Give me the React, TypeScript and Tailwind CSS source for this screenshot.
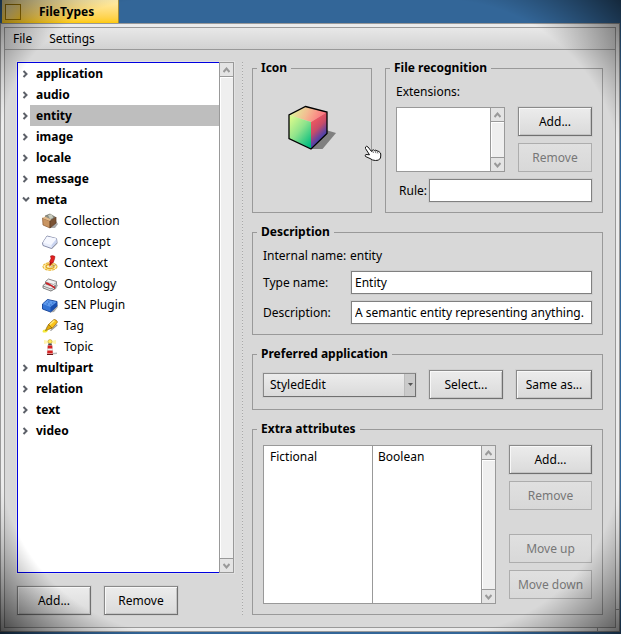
import { useState } from "react";
import type { ReactNode } from "react";

const Chevron = ({ open = false }: { open?: boolean }) => (
  <svg width="8" height="8" viewBox="0 0 8 8" className={open ? "rotate-90" : ""} aria-hidden="true">
    <path d="M1.500 1 L4.500 4 L1.500 7" fill="none" stroke="#5c6068" strokeWidth="2" />
  </svg>
);

const CollectionIcon = () => (
  <svg width="16" height="16" viewBox="0 0 16 16" aria-hidden="true">
    <path d="M8 15 L13 15 L16 11 L14 8Z" fill="#aaa" />
    <path d="M3 3 L8 1 L13 4 L8 8Z" fill="#8d8f84" stroke="#5d5a50" strokeWidth=".6" />
    <path d="M6 2 L10 1 L11 5 L8 6Z" fill="#c9cbbd" />
    <path d="M0.5 5 L8 8 L8 15 L1 12Z" fill="#c99562" stroke="#8c5c34" strokeWidth=".7" />
    <path d="M8 8 L14 4 L14 10 L8 15Z" fill="#7b5334" stroke="#5a3a22" strokeWidth=".7" />
    <path d="M0.5 5 L3 3.5 L9 6.5 L8 8Z" fill="#e3bb8c" />
  </svg>
);

const ConceptIcon = () => (
  <svg width="16" height="16" viewBox="0 0 16 16" aria-hidden="true">
    <path d="M9 15 L15 8 L15.5 9.5 L10 15Z" fill="#aaa" />
    <path d="M5 2 L14.500 4.500 L15 8.500 L9.500 14.500 L1 11.500 L0.500 9Z" fill="#e8edfb" stroke="#7a81a0" strokeWidth=".9" />
    <path d="M5 2.500 L14.500 4.500 L9.500 11 L1 8.500Z" fill="#f6f8ff" />
    <path d="M9.500 11 L14.500 5 L14.500 8.500 L9.500 14Z" fill="#c9d4f0" />
  </svg>
);

const ContextIcon = () => (
  <svg width="16" height="16" viewBox="0 0 16 16" aria-hidden="true">
    <ellipse cx="8" cy="11.500" rx="7" ry="3.700" fill="#fff3bd" stroke="#e8b530" strokeWidth="1.100" strokeDasharray="3 .6" />
    <ellipse cx="8" cy="11.500" rx="4" ry="2" fill="none" stroke="#e0a520" strokeWidth="1.300" />
    <path d="M8 12 L14 9 L15 10 L9 12.500Z" fill="#9b8d60" opacity=".6" />
    <path d="M8.500 5.500 L11.500 6 L9.500 9 L7.500 12 L7.500 8.500Z" fill="#b31212" />
    <path d="M8.500 1 Q10.500 0 13 1.500 L12.500 4 L11 8 Q9.500 8.500 7.500 7 L9 3.500Z" fill="#e32020" stroke="#8f0d0d" strokeWidth=".5" />
  </svg>
);

const OntologyIcon = () => (
  <svg width="16" height="16" viewBox="0 0 16 16" aria-hidden="true">
    <path d="M8 15.500 L14 13 L16 9 L13 8Z" fill="#aaa" />
    <path d="M1 9.500 L4 7 L13 10 L13 12.500 L9 15 L1 12Z" fill="#e9e9e9" stroke="#626262" strokeWidth=".8" />
    <path d="M1 10 L9 13 L13 10.500" fill="none" stroke="#777" strokeWidth=".8" />
    <path d="M3.500 5.500 L6.500 3 L14.500 5.500 L14.500 8.500 L11.500 10.500 L3.500 8Z" fill="#f2f2f2" stroke="#707070" strokeWidth=".8" />
    <path d="M3.500 6 L11.500 8.500 L14.500 6.500" fill="none" stroke="#888" strokeWidth=".7" />
    <path d="M3.500 6 L6.500 7 L13 11 L13 13 L9.500 10.500 L4 8Z" fill="#cf2226" />
  </svg>
);

const PluginIcon = () => (
  <svg width="16" height="16" viewBox="0 0 16 16" aria-hidden="true">
    <path d="M8 15.500 L12 15 L16 10 L15 7Z" fill="#aaa" />
    <path d="M0.500 7 L5.500 2.500 L15 4.500 L15 9 L8.500 15 L0.500 12Z" fill="#3575d6" stroke="#123f94" strokeWidth=".9" />
    <path d="M1 7 L5.500 3 L14.500 5 L8.500 10Z" fill="#5f9aec" />
    <path d="M8.500 10 L15 5 L15 9 L8.500 15Z" fill="#1b4fae" />
    <path d="M6 5h1.500M10 6h1.500M4.500 7h1.500M8 8h1.500" stroke="#2f68c4" strokeWidth="1" />
  </svg>
);

const TagIcon = () => (
  <svg width="16" height="16" viewBox="0 0 16 16" aria-hidden="true">
    <path d="M1 12 Q3 11 6 12 L5 14 Q2 15 0.500 14Z" fill="#f5ea3c" />
    <path d="M5 11 L8 12.500 L15 6 L15.500 7.500 L9 13Z" fill="#999" />
    <path d="M6.500 6.500 L12 1.500 Q14.500 1.500 15.500 4 L10.500 10 L7 10.500Z" fill="#fac31a" stroke="#a56b05" strokeWidth=".8" />
    <path d="M8 6.500 L12.500 2.500" stroke="#ffed84" strokeWidth="1.300" />
    <path d="M6.500 6.500 L10 10 L6.500 11.500 L3.500 12.500 L5 9Z" fill="#e0a90a" stroke="#7b5a0d" strokeWidth=".6" />
  </svg>
);

const TopicIcon = () => (
  <svg width="16" height="16" viewBox="0 0 16 16" aria-hidden="true">
    <path d="M2 1 L7 2 L7 4 L2 5Z M14 1 L9 2 L9 4 L14 5Z" fill="#fff6b5" />
    <path d="M10 14 L15 13.500 L15 15 L10 15.500Z" fill="#bbb" />
    <circle cx="8" cy="2.500" r="2" fill="#ffe95c" stroke="#b39425" strokeWidth=".5" />
    <path d="M6.200 4.500h3.600v2H6.200z" fill="#4c4c4c" />
    <path d="M5.800 6.500h4.400l.6 9H5.200z" fill="#f2f2f2" stroke="#999" strokeWidth=".3" />
    <path d="M5.800 6.500h4.400l.2 3H5.600zM5.400 11.500h5.200l.2 3H5.200z" fill="#d62020" />
    <path d="M5 15h6v1H5z" fill="#681414" />
  </svg>
);

const CubeIcon = () => (
  <svg width="48" height="48" viewBox="0 0 48 48" role="img" aria-label="Entity icon">
    <defs>
      <linearGradient id="cubeTop" x1="0" y1="0.200" x2="1" y2="0.400">
        <stop offset="0" stopColor="#dcff9a" />
        <stop offset=".5" stopColor="#f3bc92" />
        <stop offset="1" stopColor="#ff6a7c" />
      </linearGradient>
      <linearGradient id="cubeLeft" x1="0.100" y1="0.100" x2="0.800" y2="1">
        <stop offset="0" stopColor="#d5f98c" />
        <stop offset=".45" stopColor="#8ee38c" />
        <stop offset="1" stopColor="#00bd80" />
      </linearGradient>
      <linearGradient id="cubeRight" gradientUnits="userSpaceOnUse" x1="25" y1="16" x2="41" y2="32">
        <stop offset="0" stopColor="#f0585f" />
        <stop offset=".4" stopColor="#c84c68" />
        <stop offset=".7" stopColor="#6a449c" />
        <stop offset="1" stopColor="#1d3bb8" />
      </linearGradient>
    </defs>
    <path d="M38 26 L48 29 L34.500 45 L22 45Z" fill="#808080" />
    <path d="M17.500 2.500 L39 8 L23 18 L1 11Z" fill="url(#cubeTop)" />
    <path d="M1 11 L23 18 L23 45 L1 34.500Z" fill="url(#cubeLeft)" />
    <path d="M23 18 L39 8 L39 29.500 L23 45Z" fill="url(#cubeRight)" />
    <path d="M17.500 2.500 L39 8 L39 29.500 L23 45 L1 34.500 L1 11Z" fill="none" stroke="#000" strokeWidth="1.300" />
  </svg>
);

const HandPointer = () => (
  <svg width="18" height="17" viewBox="0 0 18 17" className="pointer-events-none absolute left-[364px] top-[145px]" aria-hidden="true">
    <path
      d="M1.500 2 Q2.500 0.500 4 2 L7.500 6.500 L8.500 5 Q10 4.500 10.500 5.500 Q12 4.500 13 6 Q14.500 5.500 15.200 7 Q17 7.500 16.800 10 L16.500 13 Q15 16 11.500 15.500 Q8.500 15.500 6 13.500 L1.500 11.500 Q0.500 10 2 9.500 L5.500 9.800 L1.500 3.500Z"
      fill="#fff"
      stroke="#111"
      strokeWidth="1"
    />
    <path d="M8.500 5.500 L9.500 8M11 5.800 L12 8.200M13.300 6.500 L14 8.500" stroke="#333" strokeWidth=".7" />
  </svg>
);

const types: { name: string; children?: { name: string; icon: ReactNode }[] }[] = [
  { name: "application" },
  { name: "audio" },
  { name: "entity" },
  { name: "image" },
  { name: "locale" },
  { name: "message" },
  {
    name: "meta",
    children: [
      { name: "Collection", icon: <CollectionIcon /> },
      { name: "Concept", icon: <ConceptIcon /> },
      { name: "Context", icon: <ContextIcon /> },
      { name: "Ontology", icon: <OntologyIcon /> },
      { name: "SEN Plugin", icon: <PluginIcon /> },
      { name: "Tag", icon: <TagIcon /> },
      { name: "Topic", icon: <TopicIcon /> },
    ],
  },
  { name: "multipart" },
  { name: "relation" },
  { name: "text" },
  { name: "video" },
];

function Button({ children, disabled, className = "w-[74px]" }: { children: ReactNode; disabled?: boolean; className?: string }) {
  return (
    <button
      type="button"
      disabled={disabled}
      className={`h-[29px] shrink-0 whitespace-nowrap border bg-linear-to-b text-center ${
        disabled
          ? "border-[#adadad] from-[#e0e0e0] to-[#d8d8d8] text-[#777]"
          : "border-[#8a8a8a] border-b-[#707070] border-r-[#707070] from-[#ececec] to-[#dadada] text-black shadow-[inset_1px_1px_0_#f8f8f8,inset_-1px_-1px_0_#c4c4c4,0_0_0_1px_#cfcfcf]"
      } ${className}`}
    >
      {children}
    </button>
  );
}

function Arrow({ down = false }: { down?: boolean }) {
  return (
    <svg width="7" height="6" viewBox="0 0 7 6" className={down ? "rotate-180" : ""} aria-hidden="true">
      <path d="M0.500 5 L3.500 1.500 L6.500 5" fill="none" stroke="#999" strokeWidth="2" />
    </svg>
  );
}

function ScrollBar() {
  return (
    <div className="flex w-[14px] shrink-0 flex-col border-l border-[#999] bg-[#efefef]">
      <button type="button" aria-label="Scroll up" className="flex h-[14px] items-center justify-center border-b border-[#999] bg-[#e4e4e4]">
        <Arrow />
      </button>
      <div className="flex-1 shadow-[inset_1px_1px_0_#fff]" />
      <button type="button" aria-label="Scroll down" className="flex h-[14px] items-center justify-center border-t border-[#999] bg-[#e4e4e4]">
        <Arrow down />
      </button>
    </div>
  );
}

function Group({ title, className = "", children }: { title: string; className?: string; children: ReactNode }) {
  return (
    <fieldset className={`min-w-0 border border-[#999] ${className}`}>
      <legend className="ml-1 px-1 font-bold leading-3">{title}</legend>
      {children}
    </fieldset>
  );
}

const field = "h-[23px] min-w-0 flex-1 border border-[#808080] bg-white px-[3px] outline-none shadow-[0_0_0_1px_#cecece]";

export default function App() {
  const [selected, setSelected] = useState("entity");
  const [open, setOpen] = useState<string[]>(["meta"]);
  const toggle = (name: string) => setOpen(open.includes(name) ? open.filter((n) => n !== name) : [...open, name]);

  return (
    <div className="relative flex min-h-screen flex-col bg-[#336698] pb-0.5 pr-px font-['Noto_Sans',sans-serif] text-xs text-black">
      <header className="ml-0.5 flex h-[23px] w-[117px] items-center gap-[18px] border-r border-[#a08a3c] bg-linear-to-b from-[#ffedab] to-[#ffcb00] pl-[3px]">
        <button type="button" aria-label="Close" className="size-4 border border-[#a57b00] bg-linear-to-br from-[#fff0b4] to-[#ffcc11]" />
        <h1 className="font-bold">FileTypes</h1>
      </header>

      <div className="relative flex flex-1 flex-col border border-[#999] bg-[#ececec] p-[3px]">
        <span className="absolute bottom-0 right-[21px] h-[3px] w-px bg-[#999]" />
        <span className="absolute bottom-[21px] right-0 h-px w-[3px] bg-[#999]" />
        <div className="flex flex-1 flex-col border border-[#999] bg-[#d8d8d8]">
          <nav className="flex h-[22px] items-center gap-[17px] border-b border-[#999] bg-linear-to-b from-[#e8e8e8] to-[#d2d2d2] pl-2">
            <button type="button">File</button>
            <button type="button">Settings</button>
          </nav>

          <main className="flex flex-1 p-3">
            <section className="flex w-[217px] shrink-0 flex-col gap-[13px]">
              <div className="flex flex-1 shadow-[0_0_0_1px_#e2e2e2]">
                <ul className="flex-1 border border-r-0 border-[#0000e0] bg-white">
                  {types.map((type) => (
                    <li key={type.name}>
                      <div className="flex h-[21px]">
                        <button
                          type="button"
                          aria-label={`Expand ${type.name}`}
                          aria-expanded={open.includes(type.name)}
                          onClick={() => toggle(type.name)}
                          className="flex w-3 items-center justify-end"
                        >
                          <Chevron open={open.includes(type.name)} />
                        </button>
                        <button
                          type="button"
                          onClick={() => setSelected(type.name)}
                          className={`flex-1 pl-1.5 text-left font-bold ${selected === type.name ? "bg-[#bebebe]" : ""}`}
                        >
                          {type.name}
                        </button>
                      </div>
                      {type.children && open.includes(type.name) && (
                        <ul>
                          {type.children.map((child) => (
                            <li key={child.name} className="flex h-[21px] items-center gap-1.5 pl-6">
                              {child.icon}
                              {child.name}
                            </li>
                          ))}
                        </ul>
                      )}
                    </li>
                  ))}
                </ul>
                <div className="flex border-y border-r border-[#999]">
                  <ScrollBar />
                </div>
              </div>
              <div className="flex gap-[13px]">
                <Button>Add...</Button>
                <Button>Remove</Button>
              </div>
            </section>

            <div className="mx-2 w-0.5 shrink-0 bg-[repeating-linear-gradient(to_bottom,#a8a8a8_0px_1px,#dedede_1px_3px)] bg-[length:1px_100%] bg-no-repeat" />

            <div className="flex min-w-0 flex-1 flex-col gap-[13px]">
              <div className="flex gap-[13px]">
                <Group title="Icon" className="w-[120px] shrink-0">
                  <div className="flex justify-center pt-[30px]">
                    <CubeIcon />
                  </div>
                </Group>
                <Group title="File recognition" className="flex-1">
                  <div className="p-2.5">
                    <div className="pb-[7px]">Extensions:</div>
                    <div className="flex gap-[13px] pb-[7px]">
                      <div className="flex h-[65px] flex-1 border border-[#999] bg-white">
                        <div role="listbox" aria-label="Extensions" className="flex-1" />
                        <ScrollBar />
                      </div>
                      <div className="flex flex-col gap-[7px]">
                        <Button>Add...</Button>
                        <Button disabled>Remove</Button>
                      </div>
                    </div>
                    <div className="flex items-center gap-0.5 pl-[3px]">
                      <label htmlFor="rule">Rule:</label>
                      <input id="rule" type="text" className={field} />
                    </div>
                  </div>
                </Group>
              </div>

              <Group title="Description">
                <div className="flex flex-col gap-[7px] p-2.5">
                  <div className="flex items-center">
                    <span className="w-[87px]">Internal name:</span>
                    <span>entity</span>
                  </div>
                  <div className="flex items-center">
                    <label htmlFor="type-name" className="w-[88px]">Type name:</label>
                    <input id="type-name" type="text" defaultValue="Entity" className={field} />
                  </div>
                  <div className="flex items-center">
                    <label htmlFor="description" className="w-[88px]">Description:</label>
                    <input id="description" type="text" defaultValue="A semantic entity representing anything." className={field} />
                  </div>
                </div>
              </Group>

              <Group title="Preferred application">
                <div className="flex items-center gap-[13px] p-2.5">
                  <div className="relative flex flex-1">
                    <select
                      aria-label="Preferred application"
                      className="h-6 flex-1 appearance-none border border-[#8a8a8a] border-b-[#707070] border-r-[#707070] bg-linear-to-b from-[#ececec] to-[#dadada] pl-1.5 shadow-[0_0_0_1px_#cfcfcf]"
                    >
                      <option>StyledEdit</option>
                    </select>
                    <div className="pointer-events-none absolute inset-y-px right-px flex w-[11px] items-center justify-center border-l border-[#bbb] bg-[#cacaca]">
                      <svg width="5" height="3" viewBox="0 0 5 3" aria-hidden="true">
                        <path d="M0 0h5L2.500 3z" fill="#555" />
                      </svg>
                    </div>
                  </div>
                  <Button>Select...</Button>
                  <Button className="w-[76px]">Same as...</Button>
                </div>
              </Group>

              <Group title="Extra attributes" className="flex flex-1 flex-col">
                <div className="flex h-full gap-[13px] p-2.5">
                  <div className="flex flex-1 border border-[#999] bg-white">
                    <table className="h-full flex-1 table-fixed text-left">
                      <tbody>
                        <tr className="align-top">
                          <td className="w-1/2 border-r border-[#999] pl-1.5 pt-[3px]">Fictional</td>
                          <td className="w-1/2 pl-[5px] pt-[3px]">Boolean</td>
                        </tr>
                      </tbody>
                    </table>
                    <ScrollBar />
                  </div>
                  <div className="flex flex-col gap-[7px]">
                    <Button className="w-[83px]">Add...</Button>
                    <Button disabled className="w-[83px]">Remove</Button>
                    <div className="mt-[17px] flex flex-col gap-[7px]">
                      <Button disabled className="w-[83px]">Move up</Button>
                      <Button disabled className="w-[83px]">Move down</Button>
                    </div>
                  </div>
                </div>
              </Group>
            </div>
          </main>
        </div>
      </div>

      <HandPointer />
      <div className="pointer-events-none absolute left-0 top-0 size-[150px] bg-[radial-gradient(circle_at_100%_100%,transparent_150px,rgb(0_0_0/0.55)_212px)]" />
      <div className="pointer-events-none absolute right-0 top-0 size-[180px] bg-[radial-gradient(circle_at_0%_100%,transparent_180px,rgb(0_0_0/0.6)_254px)]" />
      <div className="pointer-events-none absolute bottom-0 left-0 size-[180px] bg-[radial-gradient(circle_at_100%_0%,transparent_180px,rgb(0_0_0/0.7)_254px)]" />
      <div className="pointer-events-none absolute bottom-0 right-0 size-[180px] bg-[radial-gradient(circle_at_0%_0%,transparent_180px,rgb(0_0_0/0.6)_254px)]" />
    </div>
  );
}
